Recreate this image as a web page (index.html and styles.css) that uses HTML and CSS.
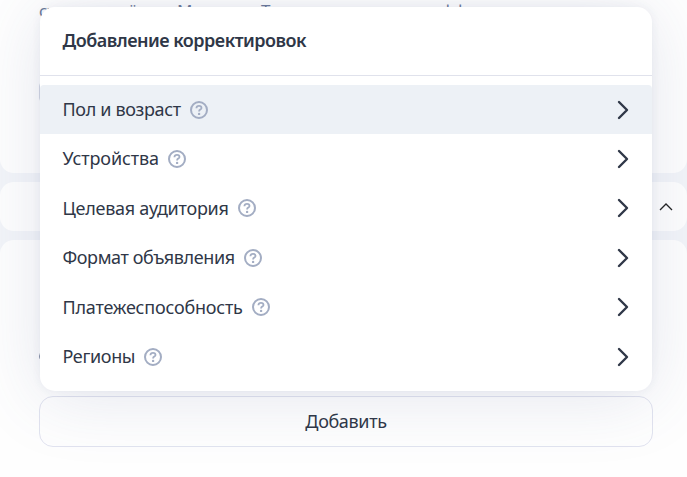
FILE: index.html
```
<!DOCTYPE html>
<html lang="ru">
<head>
  <meta charset="UTF-8">
  <title>Корректировки</title>
  <link rel="stylesheet" href="styles.css">
</head>
<body>
  <svg class="sprite" width="0" height="0">
    <symbol id="help" viewBox="0 0 18 18">
      <circle cx="9" cy="9" r="8" fill="none" stroke="currentColor" stroke-width="2"/>
      <path d="M6.4 7.2C6.5 5.7 7.6 4.9 9 4.9c1.5 0 2.5.8 2.5 2 0 1.7-2.4 1.7-2.4 3.3v.4" fill="none" stroke="currentColor" stroke-width="1.8"/>
      <circle cx="9.1" cy="12.9" r="1.2" fill="currentColor"/>
    </symbol>
    <symbol id="arrow" viewBox="0 0 12 20">
      <path d="M2 2l8 8-8 8" fill="none" stroke="currentColor" stroke-width="2.4" stroke-linecap="round" stroke-linejoin="round"/>
    </symbol>
  </svg>

  <div class="page">
    <section class="card card-top">
      <p class="hint"><span>ставка приёма</span><span>Можно</span><span>Так</span><span>эффект</span></p>
      <div class="field"></div>
    </section>
    <section class="card card-head">
      <svg class="collapse" width="14" height="8" viewBox="0 0 14 8">
        <path d="M1 7l6-6 6 6" fill="none" stroke="currentColor" stroke-width="1.3"/>
      </svg>
    </section>
    <section class="card card-body">
      <div class="mark"></div>
      <button class="add"><span>Добавить</span></button>
    </section>
  </div>

  <div class="popup">
    <h2 class="popup-title">Добавление корректировок</h2>
    <ul class="menu">
      <li class="item active"><span>Пол и возраст</span><svg class="help"><use href="#help"/></svg><svg class="arrow"><use href="#arrow"/></svg></li>
      <li class="item devices"><span>Устройства</span><svg class="help"><use href="#help"/></svg><svg class="arrow"><use href="#arrow"/></svg></li>
      <li class="item audience"><span>Целевая аудитория</span><svg class="help"><use href="#help"/></svg><svg class="arrow"><use href="#arrow"/></svg></li>
      <li class="item format"><span>Формат объявления</span><svg class="help"><use href="#help"/></svg><svg class="arrow"><use href="#arrow"/></svg></li>
      <li class="item solvency"><span>Платежеспособность</span><svg class="help"><use href="#help"/></svg><svg class="arrow"><use href="#arrow"/></svg></li>
      <li class="item regions"><span>Регионы</span><svg class="help"><use href="#help"/></svg><svg class="arrow"><use href="#arrow"/></svg></li>
    </ul>
  </div>
</body>
</html>
```
FILE: styles.css
```
* {
  box-sizing: border-box;
}

body {
  margin: 0;
  height: 477px;
  overflow: hidden;
  background: #f3f5f9;
  color: #2f3747;
  font-family: "Noto Sans", "Open Sans", sans-serif;
  font-size: 18px;
}

.sprite {
  position: absolute;
}

.page {
  display: flex;
  flex-direction: column;
  gap: 9px;
  height: 477px;
}

.card {
  background: #fefefe;
  border-radius: 14px;
}

.card-top {
  height: 173px;
  padding: 0 34px 0 39px;
  border-radius: 0 0 14px 14px;
}

.hint {
  display: flex;
  margin: 0;
  height: 82px;
  line-height: 22px;
  font-size: 17px;
  color: #6b7a99;
}

.hint span:nth-child(1) {
  width: 138px;
}

.hint span:nth-child(2) {
  width: 84px;
}

.hint span:nth-child(3) {
  width: 172px;
}

.field {
  width: 300px;
  height: 20px;
  border: 1px solid #d5d9e5;
  border-radius: 4px;
}

.card-head {
  display: flex;
  align-items: center;
  justify-content: flex-end;
  height: 49px;
  padding-right: 14px;
}

.collapse {
  color: #222;
}

.card-body {
  flex: 1;
  padding: 112px 34px 0 39px;
  border-radius: 14px 14px 0 0;
}

.mark {
  width: 9px;
  height: 9px;
  margin-bottom: 35px;
  border-radius: 50%;
  background: #8a93a8;
}

.add {
  display: block;
  width: 100%;
  height: 51px;
  padding: 0 6px 2px;
  border: 1px solid #e1e3ef;
  border-radius: 14px;
  background: none;
  color: inherit;
  font: inherit;
  letter-spacing: -0.35px;
}

/* menu opened above the button */
.popup {
  position: absolute;
  top: 7px;
  left: 40px;
  width: 612px;
  height: 384px;
  border-radius: 15px;
  background: #fff;
  box-shadow: 0 0 10px rgba(60, 70, 110, 0.07), 0 6px 70px rgba(80, 95, 150, 0.15);
}

.popup-title {
  margin: 0;
  height: 69px;
  padding-left: 22.5px;
  border-bottom: 1px solid #e0e2ec;
  line-height: 66px;
  font-size: 18px;
  font-weight: 600;
  letter-spacing: -0.5px;
}

.menu {
  margin: 0;
  padding: 9px 0 0;
  list-style: none;
}

.item {
  display: flex;
  align-items: center;
  height: 49.5px;
  padding: 0 23px;
  letter-spacing: -0.35px;
}

.item span {
  margin: 0 0 1px -0.5px;
}

.item.active {
  height: 49px;
  background: #edf1f6;
  border-radius: 4px 4px 0 0;
}

.item.devices {
  letter-spacing: -0.1px;
}

.item.audience {
  letter-spacing: -0.26px;
}

.item.format {
  letter-spacing: -0.39px;
}

.item.solvency {
  letter-spacing: -0.21px;
}

.help {
  width: 18px;
  height: 18px;
  margin-left: 9px;
  color: #a3adc3;
}

.arrow {
  width: 12px;
  height: 20px;
  margin-left: auto;
}
```
